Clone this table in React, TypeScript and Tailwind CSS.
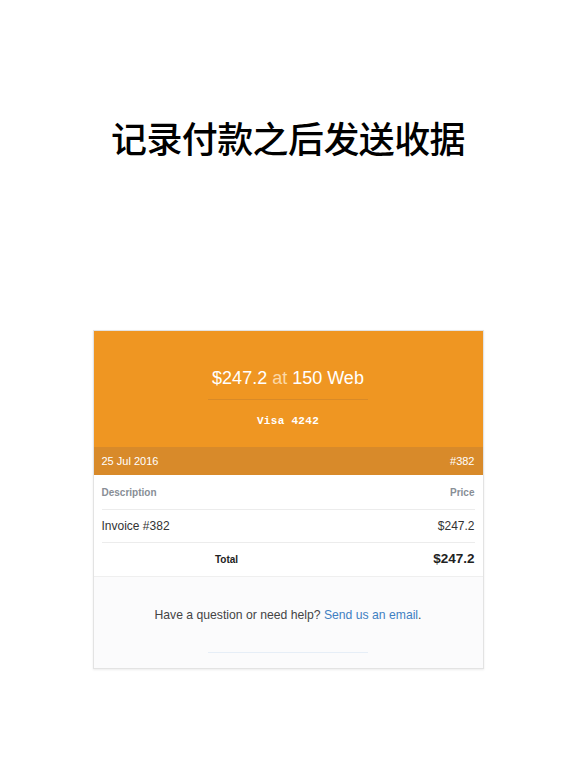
export default function App() {
  return (
    <div className="w-[576px] h-[768px] bg-white flex flex-col items-center" style={{ fontFamily: '"Liberation Sans", Arial, sans-serif' }}>
      <h1
        className="mt-[114px] h-[46px] leading-[46px] text-[36px] font-medium text-black tracking-[-0.6px]"
        style={{ fontFamily: '"Noto Sans CJK SC", sans-serif' }}
      >
        记录付款之后发送收据
      </h1>

      <div className="mt-[170px] w-[391px] border border-[#e3e3e3] shadow-[0_1px_2px_rgba(0,0,0,0.08)]">
        <div className="bg-[#ef9622] h-[116px] flex flex-col items-center pt-[36px]">
          <div className="text-[18px] text-white leading-[22px]">
            $247.2 <span className="text-[#fbd9a8]">at</span> 150 Web
          </div>
          <div className="mt-[10px] w-[160px] h-px bg-[#d98a27]" />
          <div
            className="mt-[13px] text-[11px] font-bold text-white tracking-[0.3px]"
            style={{ fontFamily: '"Liberation Mono", monospace' }}
          >
            Visa 4242
          </div>
        </div>
        <div className="bg-[#d88a2a] h-[28px] px-[8px] flex items-center justify-between text-[11px] text-white">
          <span>25 Jul 2016</span>
          <span>#382</span>
        </div>
        <div className="px-[8px] bg-white">
          <div className="h-[35px] flex items-center justify-between text-[10px] font-bold text-[#888e96] border-b border-[#ececec]">
            <span>Description</span>
            <span>Price</span>
          </div>
          <div className="h-[33px] flex items-center justify-between text-[12px] text-[#333] border-b border-[#ececec]">
            <span>Invoice #382</span>
            <span>$247.2</span>
          </div>
          <div className="h-[33px] flex items-center text-[#222]">
            <span className="w-[250px] text-center text-[10px] font-bold">Total</span>
            <span className="flex-1 text-right text-[13.5px] font-bold">$247.2</span>
          </div>
        </div>
        <div className="bg-[#fbfbfc] border-t border-[#efefef] h-[92px] flex flex-col items-center pt-[29px]">
          <div className="text-[12.2px] text-[#444]">
            Have a question or need help? <span className="text-[#3f7fc2]">Send us an email</span>.
          </div>
          <div className="mt-[28px] w-[160px] h-px bg-[#e6eef7]" />
        </div>
      </div>
    </div>
  );
}
